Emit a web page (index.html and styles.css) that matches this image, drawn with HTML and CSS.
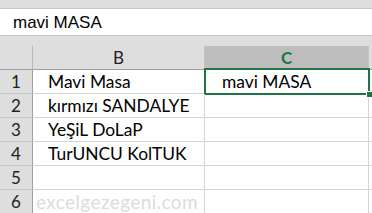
FILE: index.html
```html
<!DOCTYPE html>
<html lang="tr">

<head>
  <meta charset="UTF-8">
  <title>Excel</title>
  <link rel="stylesheet" href="styles.css">
</head>

<body>
  <div class="formula-bar">
    <div class="formula-input">mavi MASA</div>
  </div>

  <div class="sheet">
    <div class="corner"></div>
    <div class="col-head">B</div>
    <div class="col-head selected">C</div>
    <div class="col-head"></div>

    <div class="row-head">1</div>
    <div class="cell">Mavi Masa</div>
    <div class="cell active">mavi MASA</div>
    <div class="cell"></div>

    <div class="row-head">2</div>
    <div class="cell">kırmızı SANDALYE</div>
    <div class="cell"></div>
    <div class="cell"></div>

    <div class="row-head">3</div>
    <div class="cell">YeŞiL DoLaP</div>
    <div class="cell"></div>
    <div class="cell"></div>

    <div class="row-head">4</div>
    <div class="cell">TurUNCU KolTUK</div>
    <div class="cell"></div>
    <div class="cell"></div>

    <div class="row-head">5</div>
    <div class="cell"></div>
    <div class="cell"></div>
    <div class="cell"></div>

    <div class="row-head">6</div>
    <div class="cell watermark">excelgezegeni.com</div>
    <div class="cell"></div>
    <div class="cell"></div>
  </div>
</body>

</html>
```

FILE: styles.css
```css
body {
  margin: 0;
  background: #ffffff;
  font-family: 'Lato', 'Open Sans', sans-serif;
  overflow: hidden;
}

.formula-bar {
  background: #dedede;
  padding: 8px 0 10px 0;
}

.formula-input {
  height: 26px;
  background: #ffffff;
  border-top: 1px solid #c6c6c6;
  border-bottom: 1px solid #c6c6c6;
  padding-left: 13px;
  font-family: 'Liberation Sans', Arial, sans-serif;
  font-size: 17px;
  line-height: 28px;
  color: #000000;
}

.sheet {
  display: grid;
  grid-template-columns: 33px 172px 164px 1fr;
  grid-auto-rows: 24px;
}

.corner,
.col-head,
.row-head {
  background: #dedede;
  box-sizing: border-box;
}

.corner {
  border-right: 1px solid #b8b8b8;
  border-bottom: 1px solid #9f9f9f;
}

.col-head {
  border-right: 1px solid #c6c6c6;
  border-bottom: 1px solid #9f9f9f;
  text-align: center;
  font-size: 17px;
  line-height: 24px;
  color: #222222;
}

.col-head.selected {
  background: #bdbdbd;
  color: #217346;
  font-weight: 700;
}

.row-head {
  border-right: 1px solid #9f9f9f;
  border-bottom: 1px solid #c6c6c6;
  text-align: center;
  font-size: 17px;
  line-height: 24px;
  color: #222222;
}

.cell {
  position: relative;
  box-sizing: border-box;
  border-right: 1px solid #d4d4d4;
  border-bottom: 1px solid #d4d4d4;
  padding-left: 15px;
  font-size: 17.4px;
  line-height: 24px;
  color: #000000;
  white-space: nowrap;
}

.cell.active {
  padding-left: 17px;
}

.cell.active::after {
  content: '';
  position: absolute;
  top: -2px;
  left: -1px;
  right: -2px;
  bottom: -2px;
  border: 2px solid #217346;
}

.cell.active::before {
  content: '';
  position: absolute;
  right: -5px;
  bottom: -5px;
  width: 5px;
  height: 5px;
  background: #217346;
  border: 1px solid #ffffff;
  z-index: 1;
}

.watermark {
  padding-left: 3px;
  font-size: 19px;
  color: #dcdcdc;
  letter-spacing: 0.4px;
}
```
